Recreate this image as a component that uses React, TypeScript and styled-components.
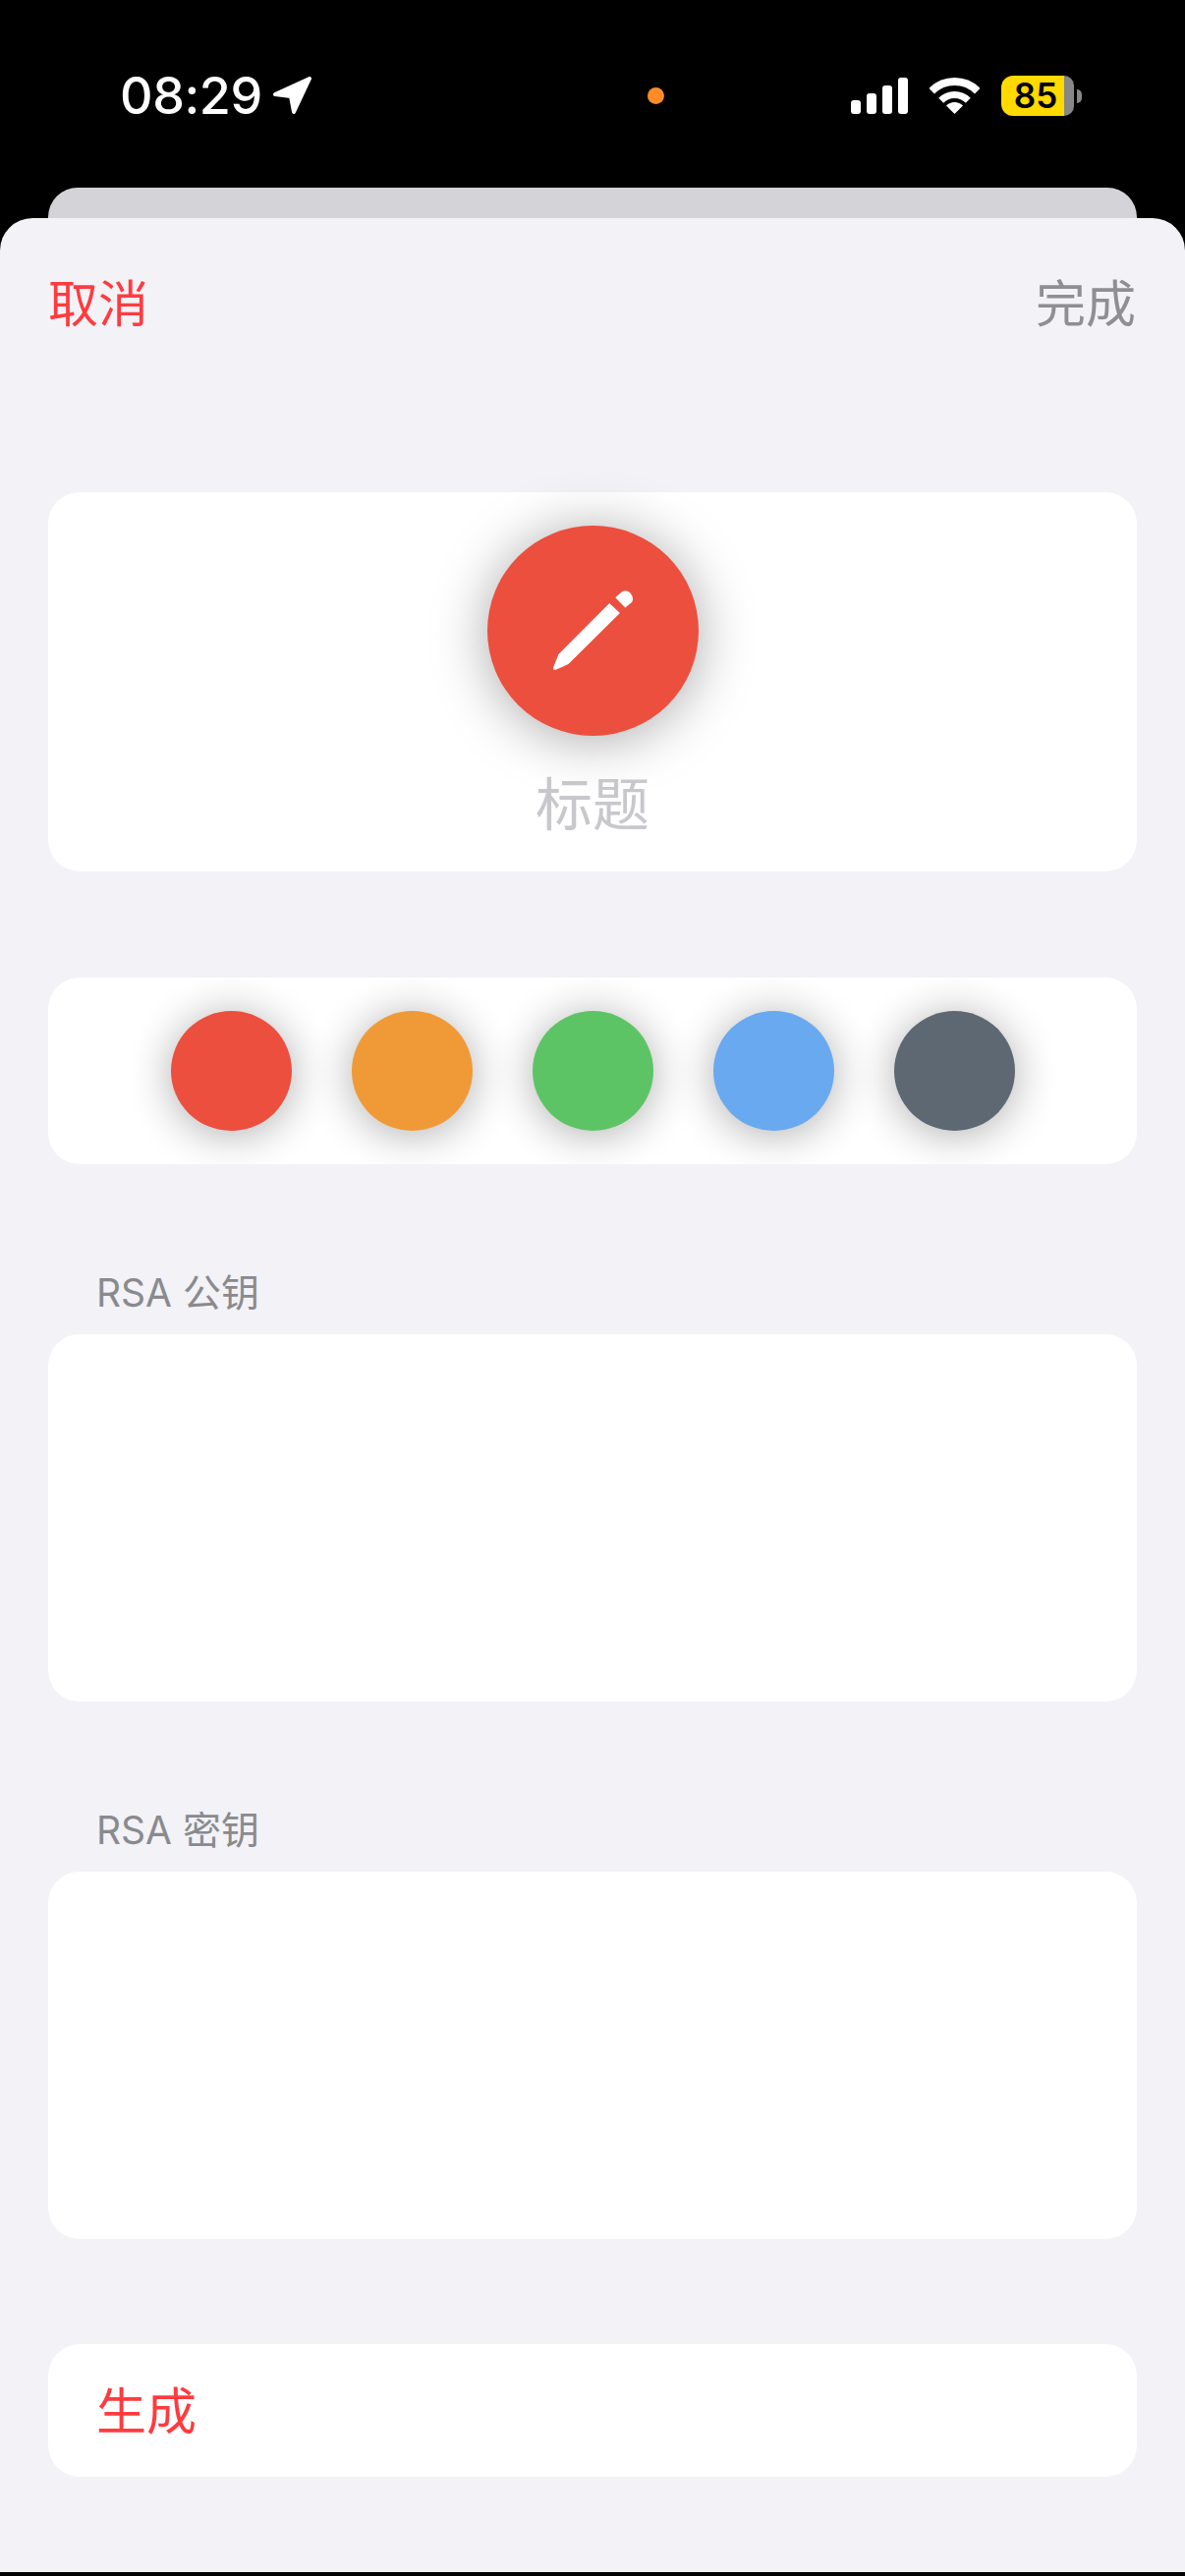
import React from 'react';
import styled, { createGlobalStyle } from 'styled-components';

const swatches = ['#ec4f3e', '#f09a37', '#5dc466', '#69a9ef', '#5e6872'];

const GlobalStyle = createGlobalStyle`
    html, body {
        margin: 0;
        padding: 0;
        background: #000;
    }
    * {
        box-sizing: border-box;
    }
`;

export default function App() {
    return (
        <Page>
            <GlobalStyle />

            <StatusBar>
                <TimeGroup>
                    <Time>08:29</Time>
                    <svg width="40" height="40" viewBox="0 0 40 40">
                        <path d="M2 18 L37 2 L21 36 L18 20 Z" fill="#fff" stroke="#fff" strokeWidth="4" strokeLinejoin="round" />
                    </svg>
                </TimeGroup>

                <MicDot />

                <StatusIcons>
                    <Signal>
                        <SignalBar $h={14} />
                        <SignalBar $h={21} />
                        <SignalBar $h={29} />
                        <SignalBar $h={37} />
                    </Signal>

                    <svg width="51" height="37" viewBox="0 0 51 37">
                        <g fill="none" stroke="#fff">
                            <path d="M2.2 13.7 A33 33 0 0 1 48.8 13.7" strokeWidth="8" />
                            <path d="M11.7 23.2 A19.5 19.5 0 0 1 39.3 23.2" strokeWidth="7" />
                        </g>
                        <path d="M25.5 37 L17 28.5 A12 12 0 0 1 34 28.5 Z" fill="#fff" />
                    </svg>

                    <Battery>
                        <BatteryLevel>85</BatteryLevel>
                        <BatteryRest />
                        <BatteryNub />
                    </Battery>
                </StatusIcons>
            </StatusBar>

            <BackSheet />

            <Sheet>
                <Nav>
                    <NavButton $color="#ff3b3f">取消</NavButton>
                    <NavButton $color="#8e8e93">完成</NavButton>
                </Nav>

                <TitleCard>
                    <BigCircle>
                        <svg width="87" height="87" viewBox="0 0 260 260">
                            <path d="M10 247 Q8 240 10 238 L25 200 L180 45 L212 75 L55 230 L17 247 Q12 248 10 247 Z" fill="#fff" />
                            <path d="M198 28 L218 10 Q230 2 242 12 L248 20 Q254 32 248 42 L228 58 Z" fill="#fff" />
                        </svg>
                    </BigCircle>
                    <TitleText>标题</TitleText>
                </TitleCard>

                <SwatchCard>
                    {swatches.map((c) => (
                        <Swatch key={c} $color={c} />
                    ))}
                </SwatchCard>

                <Section>
                    <Label>RSA 公钥</Label>
                    <Card />
                </Section>

                <Section>
                    <Label>RSA 密钥</Label>
                    <Card />
                </Section>

                <ActionCard>生成</ActionCard>
            </Sheet>
        </Page>
    );
}

const Page = styled.div`
    display: flex;
    flex-direction: column;
    height: 2622px;
    padding-bottom: 4px;
    background: #000;
    font-family: Inter, "Noto Sans CJK SC", sans-serif;
`;

const StatusBar = styled.div`
    display: flex;
    align-items: center;
    height: 191px;
    padding: 77px 105px 73px 122px;
    color: #fff;
`;

const TimeGroup = styled.div`
    display: flex;
    align-items: center;
    gap: 11px;
`;

const Time = styled.span`
    font-size: 52px;
    line-height: 41px;
    font-weight: 500;
    letter-spacing: -0.4px;
`;

const MicDot = styled.div`
    width: 17px;
    height: 17px;
    margin-left: 341px;
    border-radius: 50%;
    background: #ff8c26;
`;

const StatusIcons = styled.div`
    display: flex;
    align-items: center;
    gap: 22px;
    margin-left: auto;
`;

const Signal = styled.div`
    display: flex;
    align-items: flex-end;
    gap: 6px;
    height: 37px;
`;

const SignalBar = styled.div<{ $h: number }>`
    width: 10px;
    height: ${(p) => p.$h}px;
    border-radius: 3px;
    background: #fff;
`;

const Battery = styled.div`
    display: flex;
    align-items: center;
`;

const BatteryLevel = styled.div`
    width: 64px;
    height: 41px;
    padding-left: 6px;
    border-radius: 12px 0 0 12px;
    background: #ffd900;
    color: #000;
    font-size: 35px;
    font-weight: 600;
    line-height: 41px;
    text-align: center;
`;

const BatteryRest = styled.div`
    width: 10px;
    height: 41px;
    border-radius: 0 12px 12px 0;
    background: #878787;
`;

const BatteryNub = styled.div`
    width: 5px;
    height: 14px;
    margin-left: 3px;
    border-radius: 0 5px 5px 0;
    background: #878787;
`;

const BackSheet = styled.div`
    height: 31px;
    margin: 0 49px;
    border-radius: 30px 30px 0 0;
    background: #d4d4d8;
`;

const Sheet = styled.div`
    flex: 1;
    padding: 58px 49px 0;
    border-radius: 33px 33px 0 0;
    background: #f2f2f7;
`;

const Nav = styled.div`
    display: flex;
    justify-content: space-between;
    padding-right: 1px;
`;

const NavButton = styled.span<{ $color: string }>`
    color: ${(p) => p.$color};
    font-size: 51px;
    line-height: 60px;
    font-weight: 400;
`;

const TitleCard = styled.div`
    display: flex;
    flex-direction: column;
    align-items: center;
    gap: 35px;
    height: 386px;
    margin-top: 161px;
    padding-top: 34px;
    border-radius: 32px;
    background: #fff;
`;

const BigCircle = styled.div`
    display: flex;
    align-items: center;
    justify-content: center;
    width: 215px;
    height: 214px;
    border-radius: 50%;
    background: #ec4f3e;
    box-shadow: 0 4px 56px rgba(0, 0, 0, 0.34);
`;

const TitleText = styled.div`
    color: #c7c7cc;
    font-size: 58px;
    line-height: 70px;
`;

const SwatchCard = styled.div`
    display: flex;
    align-items: center;
    justify-content: center;
    gap: 61px;
    height: 190px;
    margin-top: 108px;
    overflow: hidden;
    border-radius: 32px;
    background: #fff;
`;

const Swatch = styled.div<{ $color: string }>`
    width: 123px;
    height: 122px;
    border-radius: 50%;
    background: ${(p) => p.$color};
    box-shadow: 0 4px 44px rgba(0, 0, 0, 0.32);
`;

const Section = styled.section`
    margin-top: 108px;
`;

const Label = styled.div`
    margin-bottom: 19px;
    padding-left: 49px;
    color: #8a8a8e;
    font-size: 39px;
    line-height: 46px;
`;

const Card = styled.div`
    height: 374px;
    border-radius: 32px;
    background: #fff;
`;

const ActionCard = styled.div`
    height: 135px;
    margin-top: 107px;
    padding-left: 49px;
    border-radius: 32px;
    background: #fff;
    color: #ff3b3f;
    font-size: 51px;
    line-height: 137px;
`;
